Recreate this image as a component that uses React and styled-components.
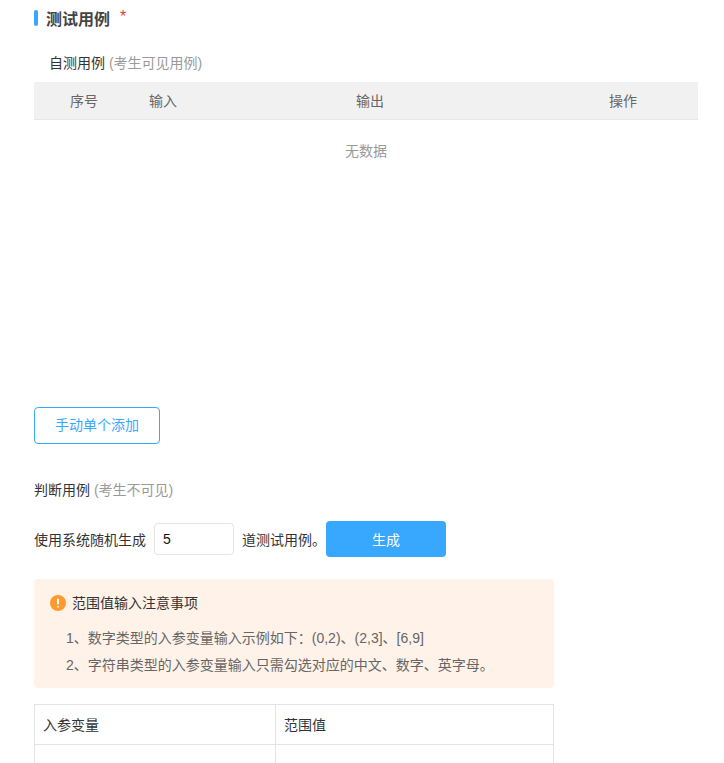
import { createGlobalStyle, styled } from 'styled-components';

const GlobalStyle = createGlobalStyle`
  html, body {
    margin: 0;
    background: #fff;
    font-family: "Liberation Sans", "Noto Sans CJK SC", sans-serif;
    font-size: 14px;
    color: #333;
  }
`

const Page = styled.div`
  box-sizing: border-box;
  height: 763px;
  overflow: hidden;
  padding: 7px 26px 0 34px;
`

const SectionTitle = styled.div`
  display: flex;
  align-items: center;
  height: 22px;
`

const TitleMark = styled.span`
  width: 4px;
  height: 16px;
  border-radius: 2px;
  background: #38a8ff;
  margin-right: 8px;
`

const TitleText = styled.h2`
  margin: 0;
  font-size: 16px;
  font-weight: 700;
  color: #444;
`

const Required = styled.span`
  margin: -3px 0 0 10px;
  color: #e23c3c;
  font-size: 16px;
`

const SubTitle = styled.div`
  margin-top: ${p => p.$top}px;
  padding-left: ${p => p.$indent || 0}px;
  height: 22px;
  line-height: 22px;
  font-size: 14px;
  color: #333;

  & span {
    color: #999;
  }
`

const CaseTable = styled.div`
  margin-top: 8px;
  height: 325px;
`

const CaseHead = styled.div`
  display: grid;
  grid-template-columns: 107px 207px 261px 89px;
  height: 37px;
  line-height: 38px;
  background: #f1f1f1;
  border-bottom: 1px solid #e6e6e6;
  color: #666;
`

const HeadCell = styled.div`
  padding-left: ${p => p.$pad}px;
`

const Empty = styled.div`
  margin-top: 20px;
  text-align: center;
  line-height: 22px;
  color: #999;
`

const OutlineButton = styled.button`
  display: block;
  width: 126px;
  height: 37px;
  padding: 0 0 3px;
  background: #fff;
  border: 1px solid #38a8ff;
  border-radius: 4px;
  color: #38a8ff;
  font: inherit;
`

const GenerateRow = styled.div`
  display: flex;
  align-items: center;
  margin-top: 20px;
  height: 36px;
`

const CountInput = styled.input`
  box-sizing: border-box;
  width: 80px;
  height: 32px;
  margin: 0 8px;
  padding: 0 8px;
  border: 1px solid #e4e4e4;
  border-radius: 4px;
  font: inherit;
  color: #111;
  outline: none;
`

const PrimaryButton = styled.button`
  width: 120px;
  height: 36px;
  padding: 0 0 1px;
  background: #38a8ff;
  border: none;
  border-radius: 4px;
  color: #fff;
  font: inherit;
`

const Notice = styled.div`
  box-sizing: border-box;
  width: 520px;
  height: 109px;
  margin-top: 22px;
  padding: 13px 16px 0;
  background: #fff2e8;
  border-radius: 4px;
`

const NoticeHead = styled.div`
  display: flex;
  align-items: center;
  gap: 6px;
  height: 22px;
  line-height: 20px;
  color: #333;
`

const NoticeList = styled.div`
  margin-top: 11px;
  padding-left: 16px;
  color: #666;
  line-height: 27px;
`

const RangeTable = styled.table`
  width: 520px;
  margin-top: 16px;
  border-collapse: collapse;
  table-layout: fixed;

  & td {
    height: 37px;
    padding: 0 8px 2px;
    border: 1px solid #e4e4e4;
    color: #333;
  }

  & td:first-child {
    width: 224px;
  }
`

const BlankRow = styled.tr`
  & td {
    height: 60px;
  }
`

function WarnIcon() {
  return (
    <svg width="16" height="16" viewBox="0 0 16 16">
      <circle cx="8" cy="8" r="8" fill="#ff9a2e" />
      <rect x="7" y="3.5" width="2" height="6" rx="1" fill="#fff" />
      <rect x="7" y="10.8" width="2" height="2" rx="1" fill="#fff" />
    </svg>
  )
}

export default function App() {
  return (
    <>
      <GlobalStyle />
      <Page>
        <SectionTitle>
          <TitleMark />
          <TitleText>测试用例</TitleText>
          <Required>*</Required>
        </SectionTitle>
        <SubTitle $top={23} $indent={15}>自测用例 <span>(考生可见用例)</span></SubTitle>
        <CaseTable>
          <CaseHead>
            <HeadCell $pad={36}>序号</HeadCell>
            <HeadCell $pad={8}>输入</HeadCell>
            <HeadCell $pad={8}>输出</HeadCell>
            <HeadCell $pad={0}>操作</HeadCell>
          </CaseHead>
          <Empty>无数据</Empty>
        </CaseTable>
        <OutlineButton>手动单个添加</OutlineButton>
        <SubTitle $top={35}>判断用例 <span>(考生不可见)</span></SubTitle>
        <GenerateRow>
          使用系统随机生成
          <CountInput defaultValue="5" />
          道测试用例。
          <PrimaryButton>生成</PrimaryButton>
        </GenerateRow>
        <Notice>
          <NoticeHead>
            <WarnIcon />
            范围值输入注意事项
          </NoticeHead>
          <NoticeList>
            <div>1、数字类型的入参变量输入示例如下：(0,2)、(2,3]、[6,9]</div>
            <div>2、字符串类型的入参变量输入只需勾选对应的中文、数字、英字母。</div>
          </NoticeList>
        </Notice>
        <RangeTable>
          <tbody>
            <tr>
              <td>入参变量</td>
              <td>范围值</td>
            </tr>
            <BlankRow>
              <td></td>
              <td></td>
            </BlankRow>
          </tbody>
        </RangeTable>
      </Page>
    </>
  )
}
